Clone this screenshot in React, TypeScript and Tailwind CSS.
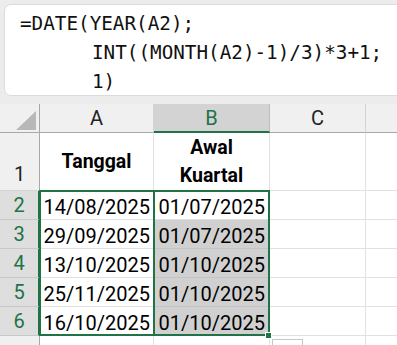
import React from "react";

function Triangle() {
  return (
    <svg width="40" height="29" viewBox="0 0 40 29" className="block">
      <polygon points="36,7 36,26 16,26" fill="#b8b8b8" />
    </svg>
  );
}

export default function App() {
  const dates = [
    ["14/08/2025", "01/07/2025"],
    ["29/09/2025", "01/07/2025"],
    ["13/10/2025", "01/10/2025"],
    ["25/11/2025", "01/10/2025"],
    ["16/10/2025", "01/10/2025"],
  ];
  const font = { fontFamily: "Roboto, 'Liberation Sans', sans-serif" };
  return (
    <div className="w-[397px] h-[345px] overflow-hidden bg-[#ececec] relative" style={font}>
      <div className="h-[104px] pl-[4px] pt-[4px]">
        <div
          className="w-[420px] h-[92px] bg-white rounded-[7px] border border-[#dcdcdc] pl-[15px] pt-[4px] text-[19.3px] leading-[29px] text-[#111] whitespace-pre"
          style={{ fontFamily: "'DejaVu Sans Mono', 'Liberation Mono', monospace" }}
        >
          <div>=DATE(YEAR(A2);</div>
          <div className="pl-[72px]">INT((MONTH(A2)-1)/3)*3+1;</div>
          <div className="pl-[72px]">1)</div>
        </div>
      </div>

      <div className="relative grid grid-cols-[40px_114px_116px_96px_31px] bg-white">
        {/* header row */}
        <div className="h-[29px] bg-[#f0f0f0] border-r border-b border-[#a8a8a8]">
          <Triangle />
        </div>
        <div className="h-[29px] bg-[#f0f0f0] border-r border-[#d4d4d4] border-b border-b-[#a8a8a8] flex items-center justify-center text-[20px] text-[#222]">
          A
        </div>
        <div className="h-[29px] bg-[#d3d3d3] border-r border-[#bdbdbd] border-b-2 border-b-[#217346] flex items-center justify-center text-[20px] text-[#217346]">
          B
        </div>
        <div className="h-[29px] bg-[#f0f0f0] border-r border-[#d4d4d4] border-b border-b-[#a8a8a8] flex items-center justify-center text-[20px] text-[#222]">
          C
        </div>
        <div className="h-[29px] bg-[#f0f0f0] border-b border-[#a8a8a8]"></div>

        {/* row 1 */}
        <div className="h-[58px] bg-[#f0f0f0] border-r border-r-[#a8a8a8] border-b border-b-[#d4d4d4] flex items-end justify-center pb-[1px] text-[20px] text-[#222]">
          1
        </div>
        <div className="h-[58px] border-r border-b border-[#e1e1e1] flex items-center justify-center font-bold text-[19.5px] text-black">
          Tanggal
        </div>
        <div className="h-[58px] border-r border-b border-[#e1e1e1] flex flex-col items-center justify-center font-bold text-[19.5px] leading-[28px] text-black">
          <span>Awal</span>
          <span>Kuartal</span>
        </div>
        <div className="h-[58px] border-r border-b border-[#e1e1e1]"></div>
        <div className="h-[58px] border-b border-[#e1e1e1]"></div>

        {dates.map(([a, b], i) => (
          <React.Fragment key={i}>
            <div className="h-[29px] bg-[#dedede] border-r-2 border-r-[#217346] border-b border-b-[#c8c8c8] flex items-center justify-center text-[20px] text-[#217346]">
              {i + 2}
            </div>
            <div className="h-[29px] border-r border-b border-[#e1e1e1] flex items-center justify-end pr-[3px] pt-[3px] text-[20px] text-black">
              {a}
            </div>
            <div
              className={
                "h-[29px] border-r border-b flex items-center justify-end pr-[4px] pt-[3px] text-[20px] text-black " +
                (i === 0 ? "bg-white border-[#e1e1e1]" : "bg-[#d0d0d0] border-[#c4c4c4]")
              }
            >
              {b}
            </div>
            <div className="h-[29px] border-r border-b border-[#e1e1e1]"></div>
            <div className="h-[29px] border-b border-[#e1e1e1]"></div>
          </React.Fragment>
        ))}

        {/* row 7 partial */}
        <div className="h-[29px] bg-[#f0f0f0] border-r border-[#a8a8a8]"></div>
        <div className="h-[29px] border-r border-[#e1e1e1]"></div>
        <div className="h-[29px] border-r border-[#e1e1e1]"></div>
        <div className="h-[29px] border-r border-[#e1e1e1]"></div>
        <div className="h-[29px]"></div>

        {/* A2:A6 outline */}
        <div className="absolute left-[39px] top-[86px] w-[116px] h-[146px] border-2 border-[#217346] pointer-events-none" />
        {/* B2:B6 selection */}
        <div className="absolute left-[153px] top-[86px] w-[117px] h-[146px] border-2 border-[#217346] pointer-events-none" />
        {/* fill handle */}
        <div className="absolute left-[265px] top-[228px] w-[7px] h-[7px] bg-[#217346] border border-white" />
        {/* quick analysis */}
        <div className="absolute left-[272px] top-[235px] w-[31px] h-[20px] bg-white border border-[#c6c6c6]" />
      </div>
    </div>
  );
}
